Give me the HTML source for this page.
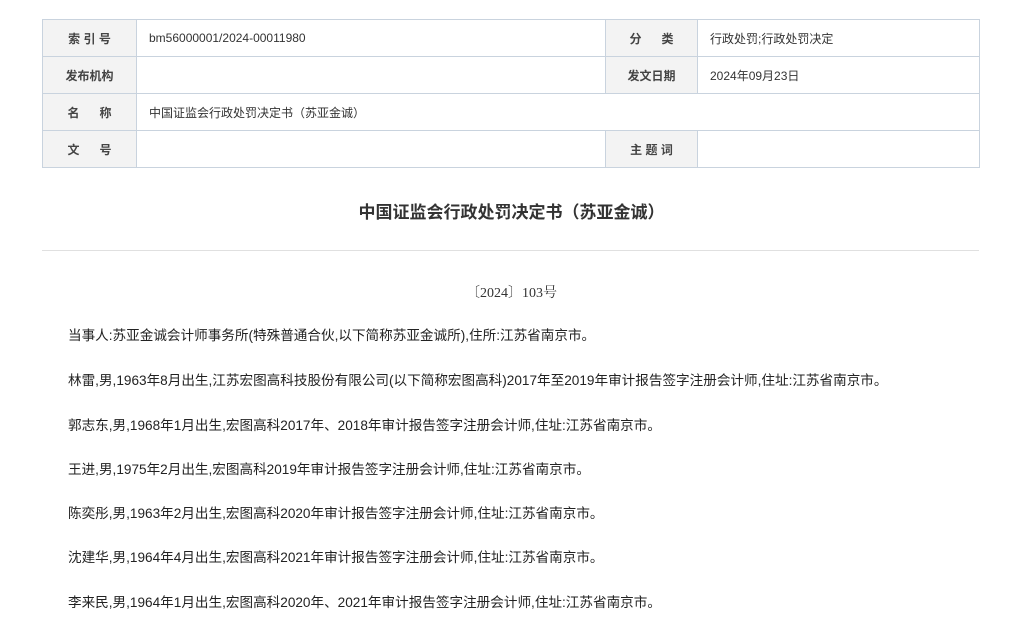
<!DOCTYPE html>
<html><head><meta charset="utf-8">
<style>
html,body{margin:0;padding:0;background:#fff;width:1023px;height:624px;overflow:hidden}
body{font-family:"Liberation Sans","Noto Sans CJK SC",sans-serif;color:#333}
table{position:absolute;left:42px;top:19px;border-collapse:collapse;width:937px;table-layout:fixed}
td{border:1px solid #c9d3de;height:36px;font-size:12px;padding:0;color:#333}
td.l{background:#f3f3f3;font-weight:bold;text-align:center;color:#444}
td.v{padding-left:12px}
h1{position:absolute;left:0;width:1023px;top:198px;margin:0;text-align:center;font-size:17px;font-weight:bold;color:#333}
.hr{position:absolute;left:42px;width:937px;top:250px;border-top:1px solid #e0e0e0}
.no{position:absolute;left:0;width:1023px;text-align:center;top:282px;font-family:"Liberation Serif","Noto Serif CJK SC",serif;font-size:14px;color:#333}
p{position:absolute;left:68px;margin:0;font-size:13.6px;color:#222;white-space:nowrap}
</style></head><body>
<table>
<colgroup><col style="width:94px"><col style="width:469px"><col style="width:92px"><col style="width:282px"></colgroup>
<tr><td class="l">索&nbsp;引&nbsp;号</td><td class="v">bm56000001/2024-00011980</td><td class="l">分&nbsp;&nbsp;&nbsp;&nbsp;&nbsp;&nbsp;类</td><td class="v">行政处罚;行政处罚决定</td></tr>
<tr><td class="l">发布机构</td><td class="v"></td><td class="l">发文日期</td><td class="v">2024年09月23日</td></tr>
<tr><td class="l">名&nbsp;&nbsp;&nbsp;&nbsp;&nbsp;&nbsp;称</td><td class="v" colspan="3">中国证监会行政处罚决定书（苏亚金诚）</td></tr>
<tr><td class="l">文&nbsp;&nbsp;&nbsp;&nbsp;&nbsp;&nbsp;号</td><td class="v"></td><td class="l">主&nbsp;题&nbsp;词</td><td class="v"></td></tr>
</table>
<h1>中国证监会行政处罚决定书（苏亚金诚）</h1>
<div class="hr"></div>
<div class="no">〔2024〕103号</div>
<p style="top:324px">当事人:苏亚金诚会计师事务所(特殊普通合伙,以下简称苏亚金诚所),住所:江苏省南京市。</p>
<p style="top:369px">林雷,男,1963年8月出生,江苏宏图高科技股份有限公司(以下简称宏图高科)2017年至2019年审计报告签字注册会计师,住址:江苏省南京市。</p>
<p style="top:414px">郭志东,男,1968年1月出生,宏图高科2017年、2018年审计报告签字注册会计师,住址:江苏省南京市。</p>
<p style="top:458px">王进,男,1975年2月出生,宏图高科2019年审计报告签字注册会计师,住址:江苏省南京市。</p>
<p style="top:502px">陈奕彤,男,1963年2月出生,宏图高科2020年审计报告签字注册会计师,住址:江苏省南京市。</p>
<p style="top:546px">沈建华,男,1964年4月出生,宏图高科2021年审计报告签字注册会计师,住址:江苏省南京市。</p>
<p style="top:591px">李来民,男,1964年1月出生,宏图高科2020年、2021年审计报告签字注册会计师,住址:江苏省南京市。</p>
</body></html>
